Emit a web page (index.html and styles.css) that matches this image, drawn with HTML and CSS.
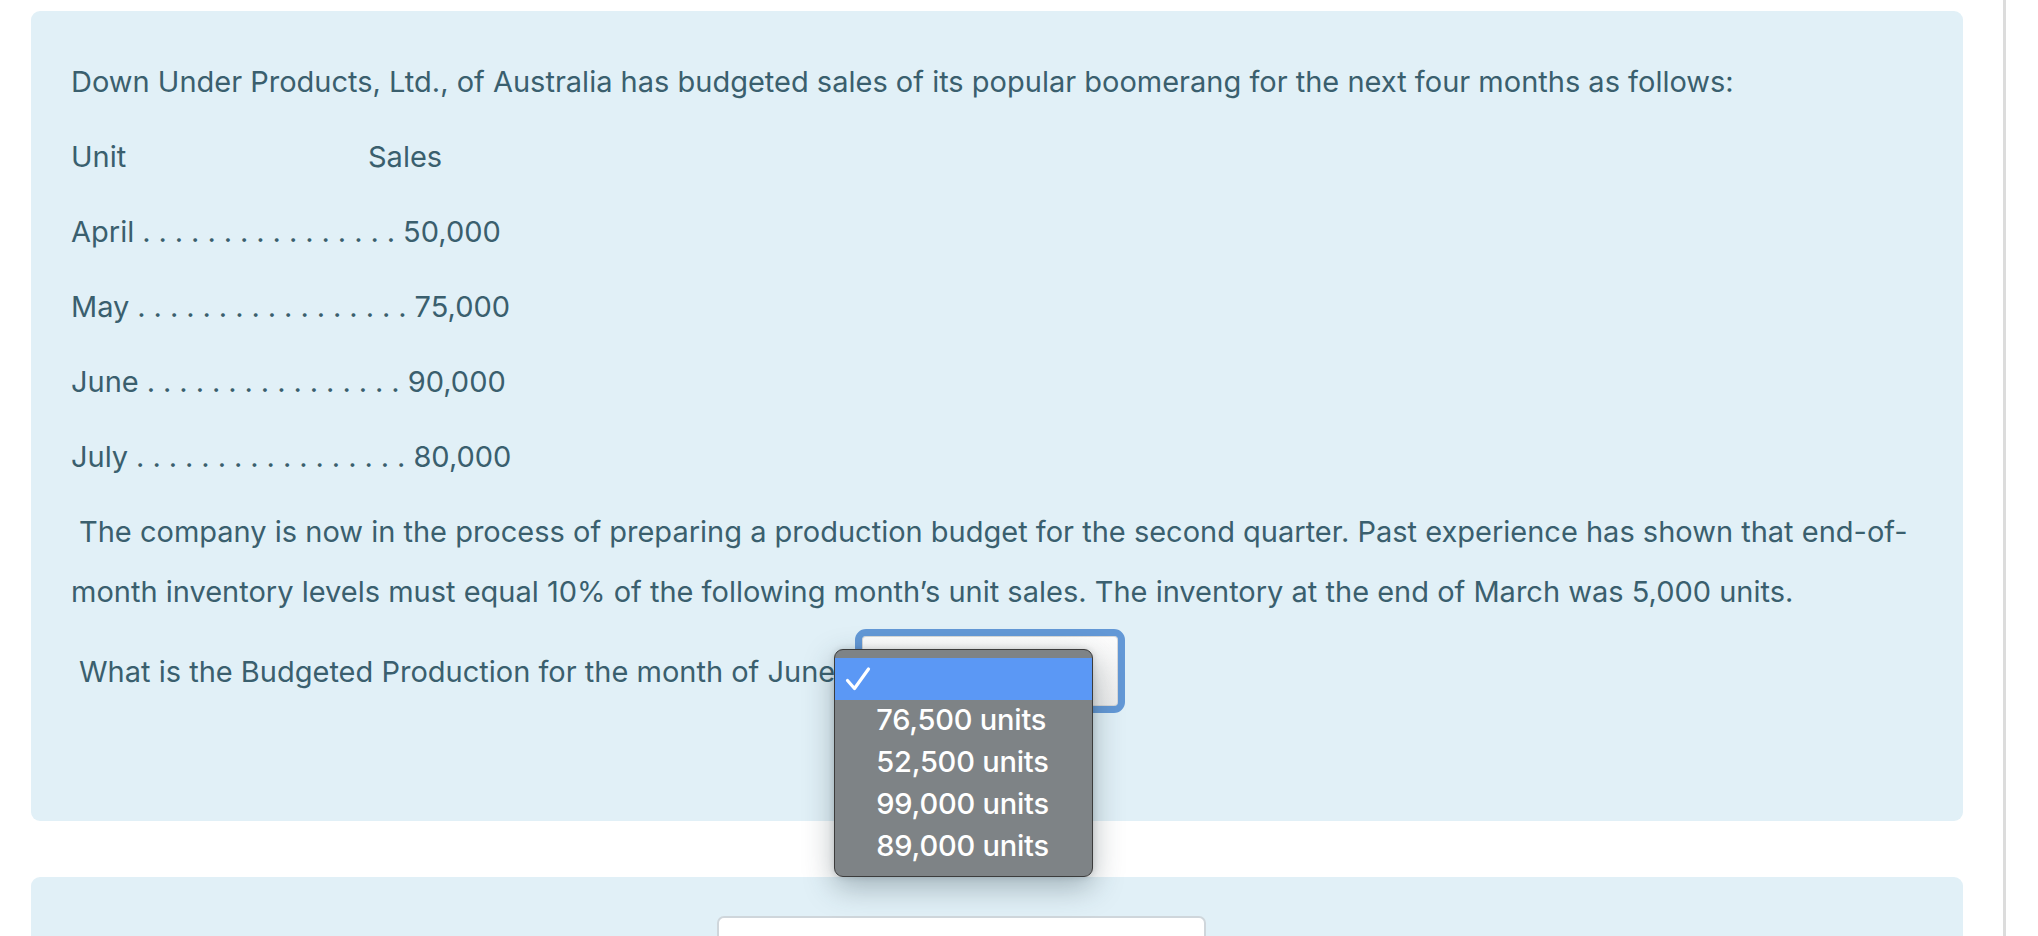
FILE: index.html
```html
<!DOCTYPE html>
<html lang="en">
<head>
<meta charset="utf-8">
<title>Production budget question</title>
<link rel="stylesheet" href="styles.css">
</head>
<body>
<div class="page">
  <main class="content">
    <section class="card">
      <p class="line">Down Under Products, Ltd., of Australia has budgeted sales of its popular boomerang for the next four months as follows:</p>
      <p class="line head"><span class="col-unit">Unit</span><span>Sales</span></p>
      <p class="line dots">April . . . . . . . . . . . . . . . . 50,000</p>
      <p class="line dots">May . . . . . . . . . . . . . . . . . 75,000</p>
      <p class="line dots">June . . . . . . . . . . . . . . . . 90,000</p>
      <p class="line dots">July . . . . . . . . . . . . . . . . . 80,000</p>
      <p class="line para"><span class="indent">The company is now in the process of preparing a production budget for the second quarter. Past experience has shown that end-of-month inventory levels must equal 10% of the following month’s unit sales. The inventory at the end of March was 5,000 units.</span></p>
      <div class="question">
        <span class="q-text">What is the Budgeted Production for the month of June</span>
        <div class="select-wrap">
          <div class="select"></div>
          <div class="dropdown">
            <div class="opt selected">
              <svg class="check" width="26" height="26" viewBox="0 0 26 26"><path d="M2.5 14.5 L9.5 22.5 L23.5 3" fill="none" stroke="#fff" stroke-width="3.2" stroke-linecap="round" stroke-linejoin="round"/></svg>
            </div>
            <div class="opt">76,500 units</div>
            <div class="opt">52,500 units</div>
            <div class="opt">99,000 units</div>
            <div class="opt">89,000 units</div>
          </div>
        </div>
      </div>
    </section>
    <section class="card card2">
      <div class="input-box"></div>
    </section>
  </main>
  <div class="rail"></div>
</div>
</body>
</html>
```
FILE: styles.css
```css
html, body {
  margin: 0;
  padding: 0;
  background: #ffffff;
  height: 100%;
  overflow: hidden;
}
body {
  font-family: Inter, "Noto Sans", "Liberation Sans", sans-serif;
  color: #3a5f6e;
}
.page {
  display: flex;
  height: 936px;
}
.content {
  width: 2003px;
  padding: 11px 40px 0 31px;
  box-sizing: border-box;
  display: flex;
  flex-direction: column;
  gap: 56px;
}
.rail {
  flex: 1;
  border-left: 3px solid #dcdcdc;
}
.card {
  background: #e1f0f7;
  border-radius: 9px;
  padding: 41px 40px 108px 40px;
}
.line {
  margin: 0 0 15px 0;
  font-size: 29px;
  line-height: 60px;
  letter-spacing: 0;
  white-space: nowrap;
}
.dots {
  word-spacing: -0.2px;
}
.para {
  white-space: normal;
  margin-bottom: 7px;
}
.indent {
  padding-left: 8px;
}
.head {
  display: flex;
}
.col-unit {
  width: 297px;
}
.question {
  display: flex;
  align-items: center;
  font-size: 29px;
  letter-spacing: 0;
}
.q-text {
  padding-left: 8px;
}
.select-wrap {
  position: relative;
  margin-left: 20px;
}
.select {
  width: 270px;
  height: 84px;
  box-sizing: border-box;
  border: 7px solid #6398d6;
  border-radius: 11px;
  background: linear-gradient(#fdfdfd, #ececec);
  box-shadow: inset 0 0 0 1px #d8d8d8;
}
.dropdown {
  position: absolute;
  left: -21px;
  top: 20px;
  width: 259px;
  height: 228px;
  box-sizing: border-box;
  padding: 8px 0 9px 0;
  background: #7e8386;
  border: 1px solid #3c3c3c;
  border-radius: 9px;
  box-shadow: 0 10px 30px rgba(40, 60, 70, 0.35), 0 0 6px rgba(0,0,0,0.15);
  z-index: 5;
  display: flex;
  flex-direction: column;
}
.opt {
  height: 42px;
  flex: none;
  display: flex;
  align-items: center;
  box-sizing: border-box;
  padding: 0 0 4px 41px;
  color: #ffffff;
  font-family: Inter, "Noto Sans", sans-serif;
  font-weight: 500;
  font-size: 29px;
  letter-spacing: -0.2px;
}
.opt.selected {
  background: #5b98f5;
  padding: 0 0 0 10px;
}
.check {
  display: block;
}
.card2 {
  padding: 39px 0 0 686px;
  height: 80px;
  box-sizing: border-box;
  flex: none;
}
.input-box {
  width: 485px;
  height: 60px;
  background: #ffffff;
  border: 2px solid #cfd6db;
  border-radius: 7px;
}
```
